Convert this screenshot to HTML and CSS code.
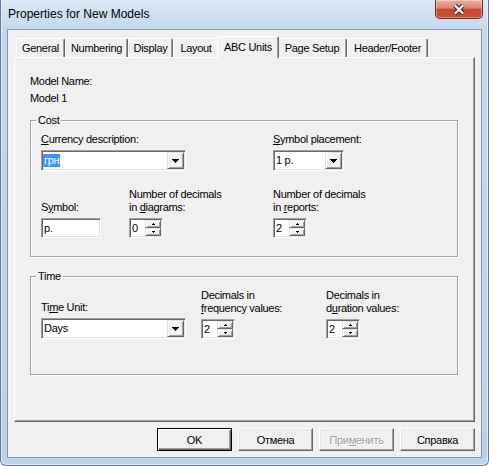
FILE: index.html
```html
<!DOCTYPE html>
<html>
<head>
<meta charset="utf-8">
<title>Properties for New Models</title>
<link rel="stylesheet" href="styles.css">
</head>
<body>
<div class="window">
  <div class="titlebar">
    <div class="title">Properties for New Models</div>
    <div class="close">
      <svg width="14" height="11" viewBox="0 0 14 11">
        <path d="M3 1.5 L11 9.5 M11 1.5 L3 9.5" stroke="#4a2018" stroke-width="4.4" fill="none"/>
        <path d="M3 1.5 L11 9.5 M11 1.5 L3 9.5" stroke="#ffffff" stroke-width="2.4" fill="none"/>
      </svg>
    </div>
  </div>
  <div class="client">
    <div class="tabs">
      <div class="tab t-general">General</div>
      <div class="tab t-numbering">Numbering</div>
      <div class="tab t-display">Display</div>
      <div class="tab t-layout">Layout</div>
      <div class="tab tab-active t-abc">ABC Units</div>
      <div class="tab t-page">Page Setup</div>
      <div class="tab t-header">Header/Footer</div>
    </div>
    <div class="panel">
      <div class="line">Model Name:</div>
      <div class="line model-value">Model 1</div>

      <div class="group group-cost">
        <div class="legend">Cost</div>
        <div class="grid cost-grid">
          <div class="cell span2">
            <div class="label"><u>C</u>urrency description:</div>
            <div class="combo sunken w-wide">
              <div class="combo-text"><span class="sel">грн</span></div>
              <div class="drop"><svg width="7" height="4" viewBox="0 0 7 4"><path d="M0 0h7v1h-1v1h-1v1h-1v1h-1v-1h-1v-1h-1v-1h-1z"/></svg></div>
            </div>
          </div>
          <div class="cell">
            <div class="label"><u>S</u>ymbol placement:</div>
            <div class="combo sunken w-place">
              <div class="combo-text">1 р.</div>
              <div class="drop"><svg width="7" height="4" viewBox="0 0 7 4"><path d="M0 0h7v1h-1v1h-1v1h-1v1h-1v-1h-1v-1h-1v-1h-1z"/></svg></div>
            </div>
          </div>

          <div class="cell">
            <div class="label">S<u>y</u>mbol:</div>
            <div class="edit sunken">р.</div>
          </div>
          <div class="cell">
            <div class="label">Number of decimals<br>in <u>d</u>iagrams:</div>
            <div class="spin sunken">
              <span class="spin-val">0</span>
              <span class="spin-btns">
                <span class="spin-btn"><svg width="3" height="2" viewBox="0 0 3 2"><path d="M1 0h1v1h1v1h-3v-1h1z"/></svg></span>
                <span class="spin-btn"><svg width="3" height="2" viewBox="0 0 3 2"><path d="M0 0h3v1h-1v1h-1v-1h-1z"/></svg></span>
              </span>
            </div>
          </div>
          <div class="cell">
            <div class="label">Number of decimals<br>in <u>r</u>eports:</div>
            <div class="spin sunken">
              <span class="spin-val">2</span>
              <span class="spin-btns">
                <span class="spin-btn"><svg width="3" height="2" viewBox="0 0 3 2"><path d="M1 0h1v1h1v1h-3v-1h1z"/></svg></span>
                <span class="spin-btn"><svg width="3" height="2" viewBox="0 0 3 2"><path d="M0 0h3v1h-1v1h-1v-1h-1z"/></svg></span>
              </span>
            </div>
          </div>
        </div>
      </div>

      <div class="group group-time">
        <div class="legend">Time</div>
        <div class="grid time-grid">
          <div class="cell">
            <div class="label">Ti<u>m</u>e Unit:</div>
            <div class="combo sunken w-wide">
              <div class="combo-text">Days</div>
              <div class="drop"><svg width="7" height="4" viewBox="0 0 7 4"><path d="M0 0h7v1h-1v1h-1v1h-1v1h-1v-1h-1v-1h-1v-1h-1z"/></svg></div>
            </div>
          </div>
          <div class="cell">
            <div class="label">Decimals in<br><u>f</u>requency values:</div>
            <div class="spin sunken">
              <span class="spin-val">2</span>
              <span class="spin-btns">
                <span class="spin-btn"><svg width="3" height="2" viewBox="0 0 3 2"><path d="M1 0h1v1h1v1h-3v-1h1z"/></svg></span>
                <span class="spin-btn"><svg width="3" height="2" viewBox="0 0 3 2"><path d="M0 0h3v1h-1v1h-1v-1h-1z"/></svg></span>
              </span>
            </div>
          </div>
          <div class="cell">
            <div class="label">Decimals in<br>d<u>u</u>ration values:</div>
            <div class="spin sunken">
              <span class="spin-val">2</span>
              <span class="spin-btns">
                <span class="spin-btn"><svg width="3" height="2" viewBox="0 0 3 2"><path d="M1 0h1v1h1v1h-3v-1h1z"/></svg></span>
                <span class="spin-btn"><svg width="3" height="2" viewBox="0 0 3 2"><path d="M0 0h3v1h-1v1h-1v-1h-1z"/></svg></span>
              </span>
            </div>
          </div>
        </div>
      </div>
    </div>
    <div class="buttons">
      <button class="btn btn-default">OK</button>
      <button class="btn">Отмена</button>
      <button class="btn btn-disabled">При<u>м</u>енить</button>
      <button class="btn">Справка</button>
    </div>
  </div>
</div>
</body>
</html>
```

FILE: styles.css
```css
* { box-sizing: border-box; }

html, body { margin: 0; padding: 0; }

body {
  width: 489px;
  height: 466px;
  overflow: hidden;
  background: #ffffff;
  font-family: "Liberation Sans", Arial, sans-serif;
  font-size: 11px;
  letter-spacing: -0.3px;
  color: #000;
}

.window {
  width: 489px;
  height: 466px;
  display: flex;
  flex-direction: column;
  background: linear-gradient(#dbe8f6 0, #c4d8ee 29px, #bcd2ea 100%);
  border: 1px solid #60789a;
  border-top: none;
  border-radius: 0 0 6px 6px;
  box-shadow: inset 1px 0 rgba(255,255,255,0.55), inset -1px 0 rgba(255,255,255,0.55), inset 0 -1px rgba(255,255,255,0.55);
}

.titlebar {
  height: 29px;
  flex: none;
  display: flex;
  align-items: center;
  padding-left: 7px;
}

.title {
  font-size: 12px;
  letter-spacing: 0;
  line-height: 15px;
  color: #000;
}

.close {
  align-self: flex-start;
  margin-left: auto;
  margin-right: 5px;
  width: 48px;
  height: 19px;
  display: flex;
  align-items: center;
  justify-content: center;
  background: linear-gradient(#eab0a3 0%, #dc8371 45%, #c8482f 52%, #c9503a 100%);
  border: 1px solid #742a1d;
  border-top: none;
  border-radius: 0 0 5px 5px;
  box-shadow: inset 0 0 0 1px rgba(255,255,255,0.35);
}

.client {
  height: 429px;
  flex: none;
  margin: 0 6px;
  border: 1px solid #8597ad;
  background: #f0f0f0;
  padding: 6px;
  display: flex;
  flex-direction: column;
}

/* Tabs */
.tabs {
  display: flex;
  align-items: flex-start;
  height: 21px;
  flex: none;
  padding-left: 2px;
}

.tab {
  height: 19px;
  margin-top: 2px;
  padding-top: 1px;
  line-height: 17px;
  text-align: center;
  white-space: nowrap;
  background: #f0f0f0;
  border-top: 1px solid #fff;
  border-left: 1px solid #fff;
  border-right: 1px solid #696969;
  border-radius: 2px 2px 0 0;
  box-shadow: inset -1px 0 #a0a0a0;
}

.tab-active {
  position: relative;
  z-index: 1;
  height: 22px;
  margin: 0 -2px 0 -2px;
  padding-top: 1px;
  line-height: 18px;
}

.t-general { width: 49px; }
.t-numbering { width: 63px; }
.t-display { width: 45px; }
.t-layout { width: 46px; }
.t-abc { width: 62px; }
.t-page { width: 70px; }
.t-header { width: 81px; }

/* Panel */
.panel {
  height: 365px;
  flex: none;
  border: 1px solid;
  border-color: #fff #696969 #696969 #fff;
  box-shadow: inset -1px -1px #a0a0a0;
  padding: 17px 16px 0 15px;
}

.line { line-height: 13px; }
.model-value { margin-top: 4px; }

.group {
  margin-top: 15px;
  border: 1px solid #a0a0a0;
  box-shadow: inset 1px 1px #fff, 1px 1px #fff;
  padding: 0 10px 18px 10px;
}

.group-time {
  margin-top: 19px;
  padding-bottom: 35px;
}

.legend {
  width: max-content;
  margin: -7px 0 0 -5px;
  padding: 0 2px;
  background: #f0f0f0;
  line-height: 13px;
}

.grid {
  display: grid;
  margin-top: 6px;
  row-gap: 17px;
  align-items: end;
}

.cost-grid { grid-template-columns: 88px 144px 1fr; }
.time-grid { grid-template-columns: 160px 125px 1fr; }

.span2 { grid-column: span 2; }

.label {
  line-height: 13px;
  margin-bottom: 4px;
  white-space: nowrap;
}

/* Sunken control frame */
.sunken {
  border: 1px solid;
  border-color: #a0a0a0 #fff #fff #a0a0a0;
  box-shadow: inset 1px 1px #696969, inset -1px -1px #e3e3e3;
  padding: 1px;
  background: #fff;
}

.combo {
  height: 21px;
  display: flex;
}

.w-wide { width: 145px; }
.w-place { width: 71px; }

.combo-text {
  flex: 1;
  display: flex;
  align-items: center;
  line-height: 13px;
  padding-left: 1px;
  white-space: nowrap;
}

.sel {
  background: #3399ff;
  color: #fff;
  padding: 0 1px;
  margin-left: -1px;
}

.drop {
  width: 17px;
  display: flex;
  align-items: center;
  justify-content: center;
  background: #f0f0f0;
  border: 1px solid;
  border-color: #e3e3e3 #696969 #696969 #e3e3e3;
  box-shadow: inset 1px 1px #fff, inset -1px -1px #a0a0a0;
}

.drop svg, .spin-btn svg { display: block; fill: #000; }

.edit {
  width: 60px;
  height: 20px;
  line-height: 16px;
  padding-left: 2px;
}

.spin {
  width: 34px;
  height: 20px;
  display: flex;
}

.spin-val {
  flex: 1;
  line-height: 16px;
  padding-left: 1px;
}

.spin-btns {
  width: 16px;
  display: flex;
  flex-direction: column;
}

.spin-btn {
  flex: 1;
  display: flex;
  align-items: center;
  justify-content: center;
  background: #f0f0f0;
  border: 1px solid;
  border-color: #e3e3e3 #696969 #696969 #e3e3e3;
  box-shadow: inset 1px 1px #fff, inset -1px -1px #a0a0a0;
}

/* Buttons */
.buttons {
  display: flex;
  justify-content: flex-end;
  gap: 6px;
  margin-top: 6px;
  flex: none;
}

.btn {
  width: 75px;
  height: 23px;
  padding: 0;
  font: inherit;
  letter-spacing: inherit;
  color: #000;
  background: #f0f0f0;
  border: 1px solid;
  border-color: #fff #696969 #696969 #fff;
  box-shadow: inset -1px -1px #a0a0a0, inset 1px 1px #e3e3e3;
  border-radius: 0;
}

.btn-default {
  border-color: #000;
  box-shadow: inset 1px 1px #fff, inset -1px -1px #696969, inset -2px -2px #a0a0a0;
}

.btn-disabled {
  color: #a0a0a0;
  text-shadow: 1px 1px #fff;
}
```
